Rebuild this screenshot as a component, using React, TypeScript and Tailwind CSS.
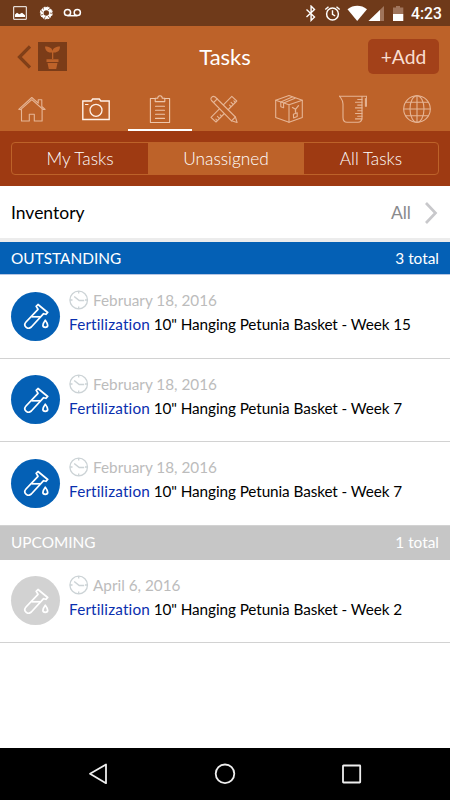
import type { ReactNode } from "react";

type Task = {
  date: string;
  week: number;
};

const outstanding: Task[] = [
  { date: "February 18, 2016", week: 15 },
  { date: "February 18, 2016", week: 7 },
  { date: "February 18, 2016", week: 7 },
];

const upcoming: Task[] = [{ date: "April 6, 2016", week: 2 }];

const NavIcon = ({ children }: { children: ReactNode }) => (
  <svg
    width="28"
    height="28"
    viewBox="0 0 28 28"
    fill="none"
    stroke="currentColor"
    strokeWidth="1.1"
    strokeLinejoin="round"
    strokeLinecap="round"
  >
    {children}
  </svg>
);

const HomeIcon = () => (
  <NavIcon>
    <path d="M3.5 14.5V26h7.8v-6.800h5V26h7.800V14.500" />
    <path d="M.7 14.300 13.800 2.500l6.400 5.700V4.800h3.600v6.700l3.300 2.900-2 .1L13.800 4.700 2.600 14.600Z" />
  </NavIcon>
);

const CameraIcon = () => (
  <NavIcon>
    <path
      strokeWidth="1.4"
      strokeLinejoin="miter"
      d="M.8 6h8.400l1.500-2h6.600l1.500 2h8.400v18.500H.8Z"
    />
    <circle cx="14" cy="15.300" r="6" strokeWidth="1.300" />
    <path d="M3.500 9.500h2.500" />
  </NavIcon>
);

const ClipboardIcon = () => (
  <NavIcon>
    <path d="M9 3.500H4.400v24h19.200v-24H19" />
    <path d="M9.200 6.600V3.200h2.500c.2-3.300 4.400-3.300 4.600 0h2.500v3.400Z" />
    <path d="M9.500 11.200h9M9.500 15.200h9M9.500 19.200h9M9.500 23.400h9" />
  </NavIcon>
);

const ToolsIcon = () => (
  <NavIcon>
    {/* ruler */}
    <path d="m1 22.300 20.800-21 5 4.700L6 27Z" />
    <path d="m7.200 25.500-1.300-1.400m3.500-.7-2-2m4.100-.2-1.300-1.400m10.700-8.200-1.300-1.400m3.500-.8-2-2m4.100-.1-1.300-1.400" />
    {/* pencil */}
    <path
      fill="#bd6229"
      d="M1.500 5.500C-.2 3 2.700.2 5.200 2L25.400 22l1.700 5.500-5.600-1.700Z"
    />
    <path d="m3.600 7.500 3.700-3.700m14.200 22 3.900-3.800" />
  </NavIcon>
);

const BoxIcon = () => (
  <NavIcon>
    <path d="M.7 5.200 14 .6l13.300 4.600v17.300L14 27.300.7 22.500Z" />
    <path d="M.7 5.200 14 9.800l13.300-4.600M14 9.800v17.500" />
    <path d="M5.800 7.100v4.600l2.800 1V8L20 3.200M5.800 7 17.200 2" />
    <path d="m17.500 12.500 3 1.800 3-3.600m-3 3.600v3" strokeWidth="1.300" />
    <path d="m18.400 19.200 3.800-1.400v3.800l-3.600 1.400Z" />
  </NavIcon>
);

const BeakerIcon = () => (
  <NavIcon>
    <path d="M.6 1.200h27v10h-1.200V3.500" />
    <path d="M.6 1.200C2.800 4.500 4 5.400 4 9v13.500c0 3 1.200 4.700 4 4.700h11c2.800 0 4-1.700 4-4.700v-21" />
    <path d="M18.700 4.500H23m-6.500 2.800H23m-4.300 2.800H23m-6.500 2.800H23m-4.300 2.800H23m-6.500 2.800H23m-4.300 2.800H23m-6.500 2.600H23" />
  </NavIcon>
);

const GlobeIcon = () => (
  <NavIcon>
    <circle cx="14" cy="14" r="13.300" />
    <ellipse cx="14" cy="14" rx="7" ry="13.300" />
    <path d="M14 .7v26.600M.7 14h26.600M2.800 7.300h22.400M2.800 20.700h22.400" />
  </NavIcon>
);

const navItems = [
  { name: "home", icon: <HomeIcon /> },
  { name: "camera", icon: <CameraIcon /> },
  { name: "tasks", icon: <ClipboardIcon /> },
  { name: "tools", icon: <ToolsIcon /> },
  { name: "box", icon: <BoxIcon /> },
  { name: "beaker", icon: <BeakerIcon /> },
  { name: "globe", icon: <GlobeIcon /> },
];

const StatusBar = () => (
  <div className="flex h-[26px] items-center justify-between bg-[#6f3a1a] pr-[9px] pl-[13px]">
    <svg width="70" height="14" viewBox="0 0 70 14" fill="none" stroke="#fff">
      <path d="M.7.7h12.600v12.600H.7Z" strokeWidth="1" />
      <path d="M2 11V8.500l2-1.800 2.300 1.600L9 6.800l3 2.400V11Z" fill="#fff" stroke="none" />
      <circle cx="33.300" cy="7" r="4.300" strokeWidth="3.200" />
      <circle cx="33.300" cy="7" r="6" strokeWidth="1" strokeDasharray="3 1.700" />
      <path
        d="m30.500 3.500-.5-3m5 3.500 2.500-2m-.7 5 3 .5m-4.500 2.500 1.500 2.700m-4.300-2.200-1.500 2.500m-.8-4.500-3 .5m2.600-3-2.200-2"
        stroke="#6f3a1a"
        strokeWidth=".7"
      />
      <circle cx="54.500" cy="6.500" r="3.100" strokeWidth="1.500" />
      <circle cx="64.300" cy="6.500" r="3.100" strokeWidth="1.500" />
      <path d="M54.500 9.700h9.800" strokeWidth="1.500" />
    </svg>
    <div className="flex items-center">
      <svg width="99" height="17" viewBox="0 0 99 17" fill="none" stroke="#fff">
        <path d="m1.500 4.500 8 7.500-3.400 3.400V1.100l3.400 3.400-8 7.500" strokeWidth="1.400" />
        <circle cx="27.500" cy="9" r="5.900" strokeWidth="1.500" />
        <path d="M27.500 5.300v4l2.700 1.700M20.300 4.500l3.200-2.700m11.200 2.700-3.200-2.700" strokeWidth="1.400" />
        <path d="M42.500 4.300c6-4.600 13.600-4.600 19.500 0L52.200 16Z" fill="#fff" stroke="none" />
        <path d="M79 1v15H63.500Z" fill="#a0755c" stroke="none" />
        <path d="M75 5v11H63.500Z" fill="#fff" stroke="none" />
        <path d="M88 2.500h3V1h4v1.500h3.300V9H88Z" fill="#a0755c" stroke="none" />
        <path d="M88 9h10.300v7H88Z" fill="#fff" stroke="none" />
      </svg>
      <span className="ml-[7px] w-[30px] pt-px font-[Roboto] text-[15.7px] leading-[26px] font-medium text-white">
        4:23
      </span>
    </div>
  </div>
);

const Header = () => (
  <header className="grid h-[61px] grid-cols-3 items-center bg-[#bd6229] px-[11px]">
    <div className="flex items-center gap-[7px] pl-[6px]">
      <svg width="14" height="24" viewBox="0 0 14 24" fill="none" stroke="#813f18" strokeWidth="3.200">
        <path d="M13 1.500 2.500 12 13 22.500" />
      </svg>
      <svg width="29" height="29" viewBox="0 0 29 29" fill="#bd6229">
        <path d="M0 0h29v29H0Z" fill="#7b3c18" />
        <path d="M14 17v-6.500C9 11 7.200 8 7 4.500c4.500 0 7 1.700 7.500 4.500C15 6.200 18 4.500 22 4.500c0 4-2 6.300-6.700 6V17Z" />
        <path d="M8.500 17.300h12v2.800h-12ZM9.500 21h10l-1.300 6h-7.400Z" />
      </svg>
    </div>
    <h1 className="text-center text-[22px] leading-7 text-white">Tasks</h1>
    <button className="h-[35px] w-[71px] justify-self-end rounded-[5px] bg-[#a34119] pt-px text-[19.3px] text-[#f8ded0]">
      +Add
    </button>
  </header>
);

const Nav = () => (
  <nav className="grid h-11 grid-cols-7 bg-[#bd6229] pr-px">
    {navItems.map((item) => (
      <div
        key={item.name}
        className={
          item.name === "tasks"
            ? "flex justify-center border-b-2 border-white pt-2 text-[#edc5aa]"
            : item.name === "camera"
              ? "flex justify-center pt-2 text-[#fff1e8]"
              : "flex justify-center pt-2 text-[#e6b595]"
        }
      >
        {item.icon}
      </div>
    ))}
  </nav>
);

const FilterTabs = () => (
  <div className="h-[55px] bg-[#9e3a12] px-[11px] pt-[11px]">
    <div className="grid h-[33px] grid-cols-[136px_156px_1fr] overflow-hidden rounded-[4px] border border-[#bd6229] text-center text-[17.3px] leading-[31px] font-light text-white">
      <span>My Tasks</span>
      <span className="bg-[#bd6229]">Unassigned</span>
      <span>All Tasks</span>
    </div>
  </div>
);

const ClockIcon = () => (
  <svg width="20" height="20" viewBox="0 0 20 20" fill="none" stroke="#ccd3d6" strokeWidth="1.300">
    <circle cx="9.700" cy="10" r="8.800" />
    <path d="M9.700 1v2.500M9.700 16.500V19M1 10h2.500M16 10h2.500" />
    <path d="m5.200 6.500 5 4h5" strokeWidth="1.500" />
  </svg>
);

const TubeIcon = () => (
  <svg
    width="26"
    height="26"
    viewBox="0 0 26 26"
    fill="none"
    stroke="#fff"
    strokeWidth="1.700"
    strokeLinejoin="round"
  >
    <path d="m15 1.500 9.700 8-1.800 1.800-2.300-.6L8.300 24c-3.700 3.300-8.700-1.300-5.300-5L15 6.300l-1.800-2.900Z" />
    <path d="M8.500 13.800h8.700" />
    <path d="M22.300 17.200c-3.400 4.400-3 7.100 0 7.100s3.400-2.700 0-7.100Z" />
  </svg>
);

const TaskRow = ({ task, muted = false }: { task: Task; muted?: boolean }) => (
  <div className="flex h-[83.5px] items-center gap-[9px] border-b border-[#d2d2d2] pl-[11px]">
    <div
      className={
        muted
          ? "flex size-[49px] items-center justify-center rounded-full bg-[#d2d2d2]"
          : "flex size-[49px] items-center justify-center rounded-full bg-[#0460b5]"
      }
    >
      <TubeIcon />
    </div>
    <div className="pb-2 text-[15.3px] leading-6 whitespace-nowrap">
      <div className="flex items-center gap-1 text-[#bcbcbc]">
        <ClockIcon />
        <span>{task.date}</span>
      </div>
      <p className="tracking-[-0.09px] text-black">
        <span className="tracking-[0.16px] text-[#0a2fae]">Fertilization</span> 10"
        Hanging Petunia Basket - Week {task.week}
      </p>
    </div>
  </div>
);

const NavigationBar = () => (
  <div className="flex h-[52px] items-center justify-center bg-black">
    <svg width="274" height="22" viewBox="0 0 274 22" fill="none" stroke="#eee" strokeWidth="1.800">
      <path d="M18 1.500v18.700L2 10.800Z" strokeLinejoin="round" />
      <circle cx="137" cy="10.800" r="9.300" />
      <rect x="255" y="2.500" width="17.200" height="17" rx=".5" />
    </svg>
  </div>
);

export default function App() {
  return (
    <div className="flex h-[800px] w-[450px] flex-col overflow-hidden bg-white font-[Lato,sans-serif] [font-variant-ligatures:none]">
      <StatusBar />
      <Header />
      <Nav />
      <FilterTabs />
      <main className="flex-1">
        <div className="flex h-[52px] items-center justify-between pt-0.5 pr-[12px] pl-[11px] text-[17.5px]">
          <span className="text-black">Inventory</span>
          <div className="flex items-center gap-[13px] text-[#8a8a8d]">
            <span>All</span>
            <svg width="14" height="22" viewBox="0 0 14 22" fill="none" stroke="#c8c8cb" strokeWidth="2.700">
              <path d="m2 1 9.500 10L2 21" />
            </svg>
          </div>
        </div>
        <div className="flex h-[37px] items-center justify-between border-t-4 border-b border-t-[#ececec] border-b-[#b5c5e2] bg-[#0460b5] px-[11px] pt-px text-[15.4px] text-white">
          <span>OUTSTANDING</span>
          <span>3 total</span>
        </div>
        {outstanding.map((task, i) => (
          <TaskRow key={i} task={task} />
        ))}
        <div className="flex h-[34px] items-center justify-between bg-[#c6c6c6] px-[11px] text-[15.4px] text-white">
          <span>UPCOMING</span>
          <span>1 total</span>
        </div>
        {upcoming.map((task, i) => (
          <TaskRow key={i} task={task} muted />
        ))}
      </main>
      <NavigationBar />
    </div>
  );
}
